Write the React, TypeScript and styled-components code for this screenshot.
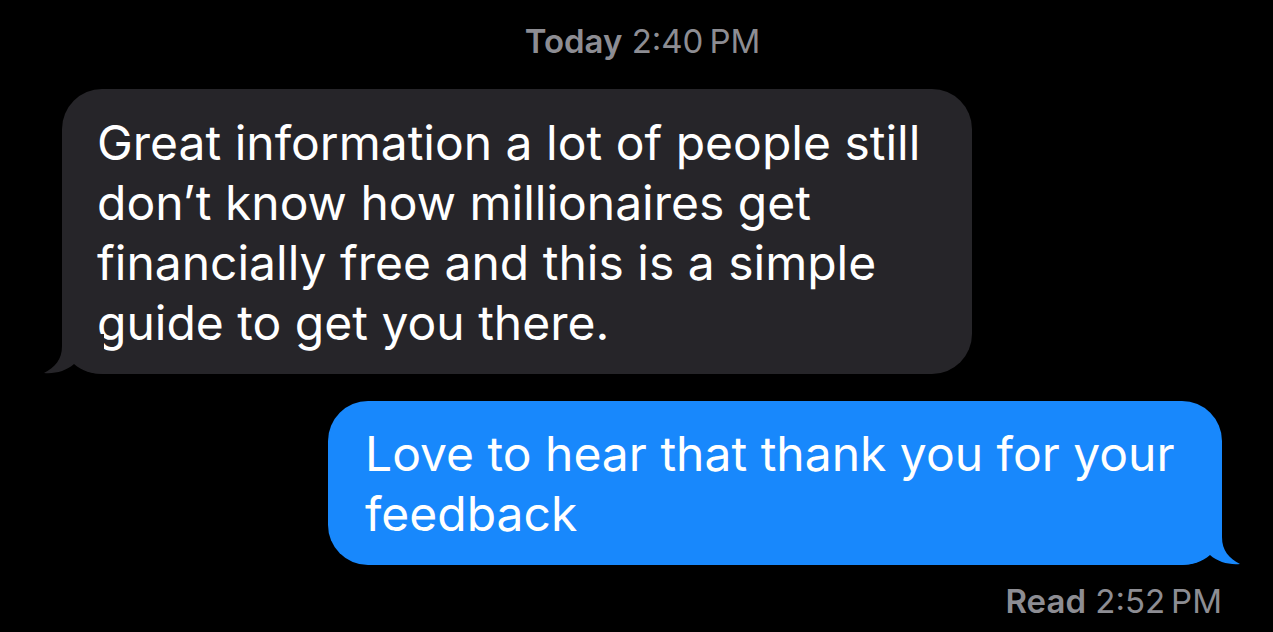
import React from 'react';
import styled, { createGlobalStyle } from 'styled-components';

const GlobalStyle = createGlobalStyle`
    html, body {
        margin: 0;
        padding: 0;
        background: #000;
    }
    body {
        font-family: Inter, "Noto Sans", "Liberation Sans", sans-serif;
        -webkit-font-smoothing: antialiased;
    }
`;

const Thread = styled.div`
    width: 1273px;
    height: 632px;
    background: #000;
    display: flex;
    flex-direction: column;
    padding-top: 21px;
    box-sizing: border-box;
    overflow: hidden;
`;

const Stamp = styled.div<{ $align: 'center' | 'right' }>`
    font-size: 33px;
    line-height: 40px;
    color: #8d8d93;
    text-align: ${p => p.$align};
    padding-right: ${p => (p.$align === 'right' ? '51px' : '0')};
    margin-top: ${p => (p.$align === 'right' ? '16px' : '0')};
    padding-left: ${p => (p.$align === 'center' ? '12px' : '0')};

    b {
        font-weight: 600;
    }
`;

const Row = styled.div<{ $mine?: boolean }>`
    display: flex;
    justify-content: ${p => (p.$mine ? 'flex-end' : 'flex-start')};
    padding: ${p => (p.$mine ? '0 51px 0 0' : '0 0 0 62px')};
    margin-top: ${p => (p.$mine ? '27px' : '28px')};
`;

const Bubble = styled.div<{ $mine?: boolean; $width: number }>`
    position: relative;
    width: ${p => p.$width}px;
    box-sizing: border-box;
    padding: ${p => (p.$mine ? '23px 30px 21px 37px' : '24px 30px 21px 35px')};
    border-radius: 40px;
    background: ${p => (p.$mine ? '#1888fc' : '#262529')};
    color: #fff;
    font-size: 48px;
    line-height: 60px;
    white-space: nowrap;
`;

const Tail = styled.svg<{ $mine?: boolean }>`
    position: absolute;
    bottom: 0;
    width: 60px;
    height: 40px;
    ${p => (p.$mine ? 'right: -18px; transform: scaleX(-1);' : 'left: -18px;')}
`;

const BubbleTail = ({ mine, color }: { mine?: boolean; color: string }) => (
    <Tail $mine={mine} viewBox="0 0 60 40">
        <path
            d="M18 0 L18 12 C18 26 11 33 0 39 C11 40 22 37 30 30 C38 37 48 40 60 40 L60 0 Z"
            fill={color}
        />
    </Tail>
);

export default function App() {
    return (
        <>
            <GlobalStyle/>
            <Thread>
                <Stamp $align={'center'}>
                    <b>Today</b> 2:40&#8239;PM
                </Stamp>
                <Row>
                    <Bubble $width={910}>
                        Great information a lot of people still<br/>
                        don’t know how millionaires get<br/>
                        financially free and this is a simple<br/>
                        guide to get you there.
                        <BubbleTail color={'#262529'}/>
                    </Bubble>
                </Row>
                <Row $mine={true}>
                    <Bubble $mine={true} $width={894}>
                        Love to hear that thank you for your<br/>
                        feedback
                        <BubbleTail mine={true} color={'#1888fc'}/>
                    </Bubble>
                </Row>
                <Stamp $align={'right'}>
                    <b>Read</b> 2:52&#8239;PM
                </Stamp>
            </Thread>
        </>
    );
}
